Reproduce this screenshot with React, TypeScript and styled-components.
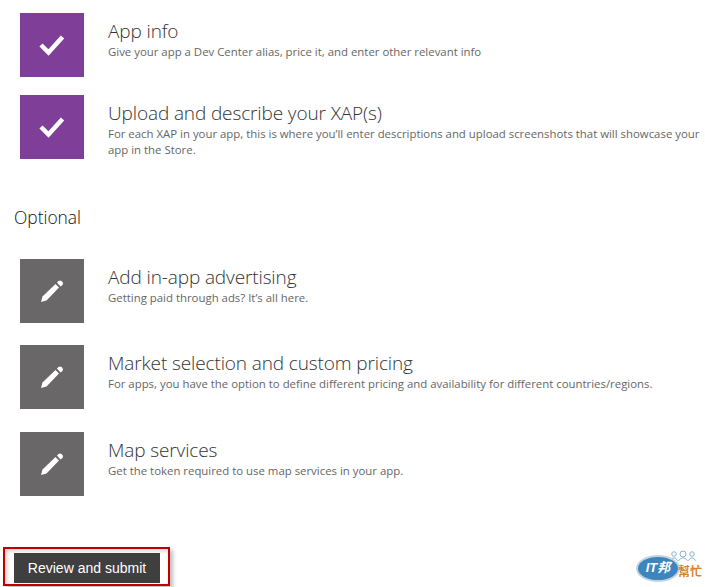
import styled, { createGlobalStyle } from 'styled-components';

const GlobalStyle = createGlobalStyle`
  html, body {
    margin: 0;
    padding: 0;
    background: #fff;
    overflow: hidden;
  }
`;

const Page = styled.div`
  width: 705px;
  height: 587px;
  position: relative;
  overflow: hidden;
  font-family: 'Open Sans', 'Liberation Sans', sans-serif;
`;

const List = styled.div<{ $top: number; $gap: number }>`
  display: flex;
  flex-direction: column;
  gap: ${(p) => p.$gap}px;
  padding: ${(p) => p.$top}px 0 0 20px;
`;

const Row = styled.div`
  display: flex;
  gap: 24px;
  height: 64px;
  &:nth-child(3) {
    margin-top: 1px;
  }
`;

const Tile = styled.div<{ $done?: boolean }>`
  width: 64px;
  height: 64px;
  flex: none;
  display: flex;
  align-items: center;
  justify-content: center;
  background: ${(p) => (p.$done ? '#7f3f98' : '#696767')};
`;

const Body = styled.div`
  padding-top: 5px;
`;

const Title = styled.div`
  font-size: 19px;
  font-weight: 300;
  letter-spacing: -0.12px;
  line-height: 26px;
  color: #333;
`;

const Sub = styled.div`
  font-size: 11.4px;
  line-height: 16px;
  color: #666;
  width: 592px;
`;

const Heading = styled.h2`
  margin: 43px 0 0 14px;
  font-size: 17.4px;
  font-weight: 300;
  line-height: 30px;
  color: #111;
`;

const Footer = styled.div`
  margin-top: 57px;
  padding-left: 14px;
`;

const Submit = styled.button`
  display: block;
  width: 146px;
  height: 30px;
  padding: 0;
  border: 0;
  background: #3f3f3f;
  color: #fff;
  font-family: 'Liberation Sans', Arial, sans-serif;
  font-size: 14px;
`;

const Highlight = styled.div`
  position: absolute;
  left: 3px;
  top: 547px;
  width: 163px;
  height: 35px;
  border: 2px solid #c00000;
  box-shadow: 3px 3px 4px rgba(0, 0, 0, 0.25), inset 2px 2px 4px rgba(0, 0, 0, 0.18);
  pointer-events: none;
`;

const Logo = styled.div`
  position: absolute;
  left: 636px;
  top: 549px;
  width: 68px;
  height: 34px;
`;

const LogoBadge = styled.div`
  position: absolute;
  left: 0;
  top: 6px;
  width: 44px;
  height: 27px;
  border-radius: 50%;
  background: #3c85bd;
  border: 2px solid #c3d3df;
  box-sizing: border-box;
  color: #fff;
  font-family: 'Liberation Sans', 'Noto Sans CJK TC', sans-serif;
  font-size: 13px;
  font-weight: 700;
  font-style: italic;
  line-height: 22px;
  text-align: center;
  white-space: nowrap;
`;

const LogoHelp = styled.div`
  position: absolute;
  left: 42px;
  top: 14px;
  color: #d9822b;
  font-family: 'Noto Sans CJK TC', sans-serif;
  font-size: 12px;
  font-weight: 700;
  line-height: 15px;
  white-space: nowrap;
`;

const LogoPeople = styled.svg`
  position: absolute;
  left: 32px;
  top: 1px;
`;

const Check = () => (
  <svg width="26" height="22" viewBox="0 0 26 22">
    <path d="M2 11 L9.5 18.5 L23.5 3" fill="none" stroke="#fff" strokeWidth="4.5" />
  </svg>
);

const Pencil = () => (
  <svg width="24" height="24" viewBox="0 0 24 24">
    <path d="M1 23 L2.5 17.5 L15.5 5 L19 8.5 L6.5 21.5 Z" fill="#fff" />
    <path d="M17 3.5 L18.5 2 Q20 1 21.5 2 L22.5 3 Q23.5 4.5 22.5 6 L20.5 7.5 Z" fill="#fff" />
  </svg>
);

const Person = ({ x, r }: { x: number; r: number }) => (
  <>
    <circle cx={x} cy={5} r={r} fill="#fff" stroke="#7fb0d3" strokeWidth="1.3" />
    <path d={`M${x - r - 2} 14 Q${x} ${6} ${x + r + 2} 14`} fill="#fff" stroke="#7fb0d3" strokeWidth="1.3" />
  </>
);

const required = [
  { title: 'App info', sub: 'Give your app a Dev Center alias, price it, and enter other relevant info' },
  {
    title: 'Upload and describe your XAP(s)',
    sub: 'For each XAP in your app, this is where you’ll enter descriptions and upload screenshots that will showcase your app in the Store.',
  },
];

const optional = [
  { title: 'Add in-app advertising', sub: 'Getting paid through ads? It’s all here.' },
  {
    title: 'Market selection and custom pricing',
    sub: 'For apps, you have the option to define different pricing and availability for different countries/regions.',
  },
  { title: 'Map services', sub: 'Get the token required to use map services in your app.' },
];

export default function App() {
  return (
    <Page>
      <GlobalStyle />
      <List $top={13} $gap={18}>
        {required.map((r) => (
          <Row key={r.title}>
            <Tile $done>
              <Check />
            </Tile>
            <Body>
              <Title>{r.title}</Title>
              <Sub>{r.sub}</Sub>
            </Body>
          </Row>
        ))}
      </List>
      <Heading>Optional</Heading>
      <List $top={27} $gap={22}>
        {optional.map((r) => (
          <Row key={r.title}>
            <Tile>
              <Pencil />
            </Tile>
            <Body>
              <Title>{r.title}</Title>
              <Sub>{r.sub}</Sub>
            </Body>
          </Row>
        ))}
      </List>
      <Footer>
        <Submit>Review and submit</Submit>
      </Footer>
      <Highlight />
      <Logo>
        <LogoPeople width="30" height="14" viewBox="0 0 40 18">
          <Person x={8} r={3} />
          <Person x={20} r={4} />
          <Person x={32} r={3} />
        </LogoPeople>
        <LogoBadge>IT邦</LogoBadge>
        <LogoHelp>幫忙</LogoHelp>
      </Logo>
    </Page>
  );
}
